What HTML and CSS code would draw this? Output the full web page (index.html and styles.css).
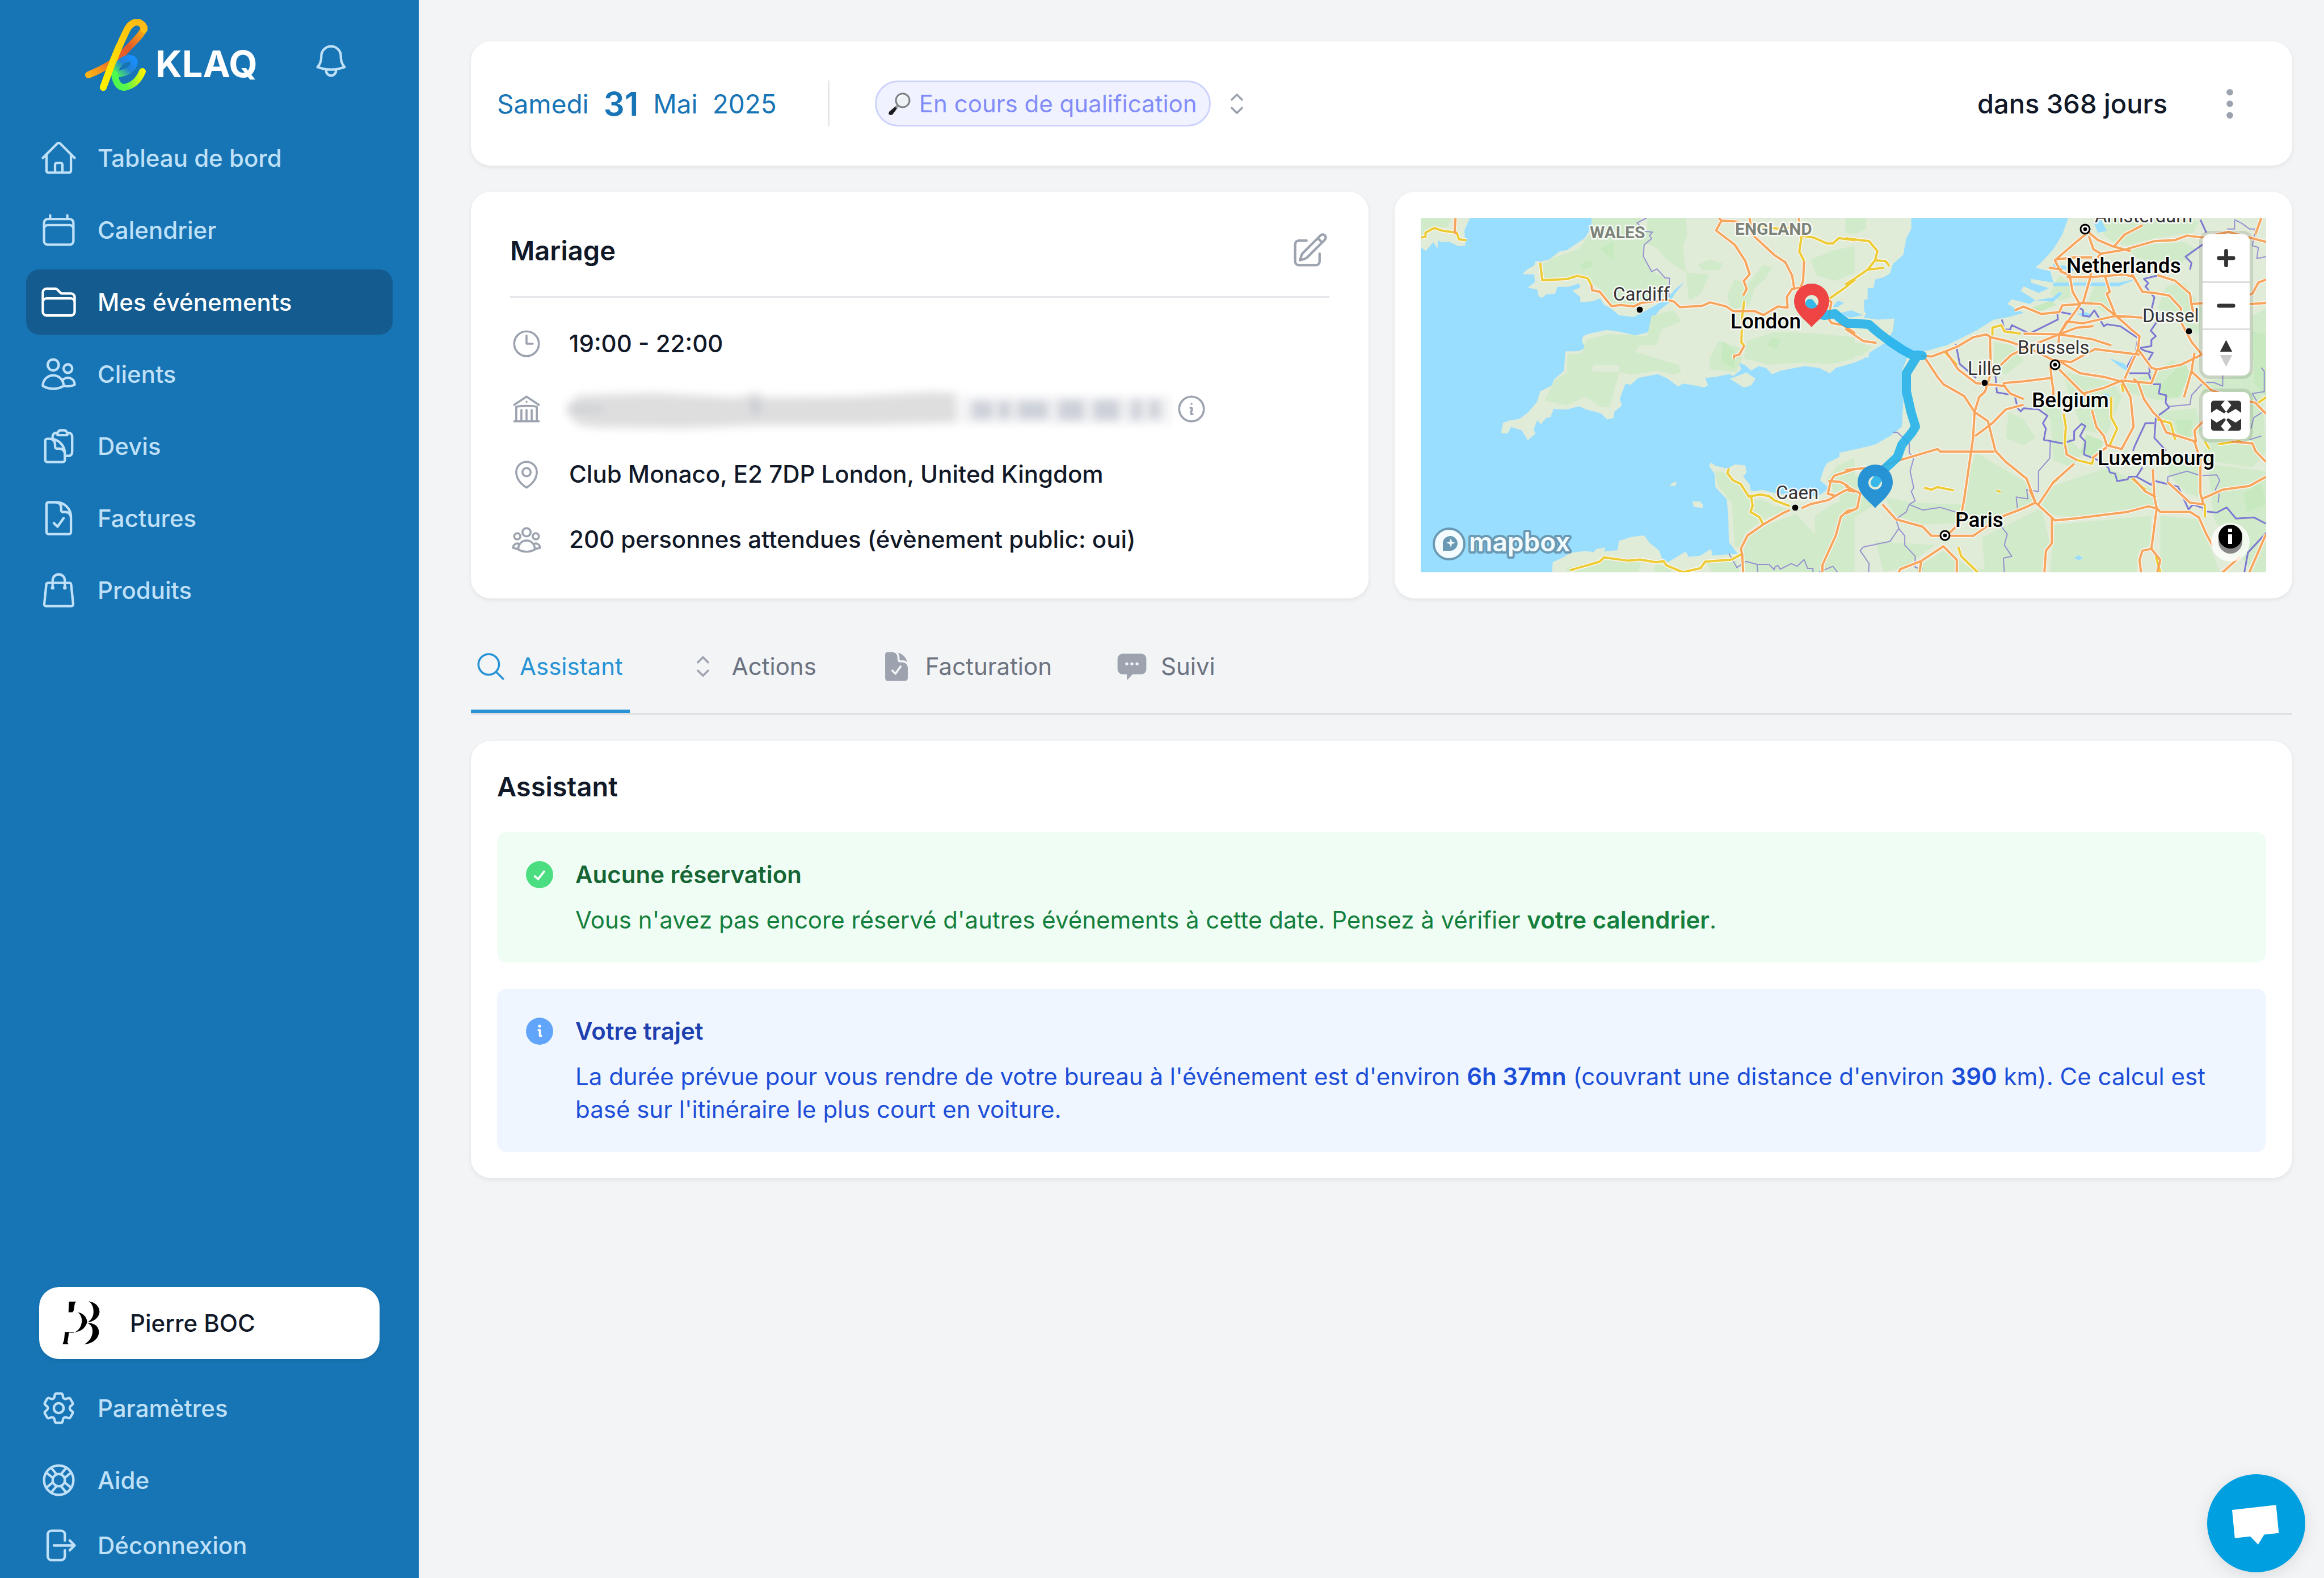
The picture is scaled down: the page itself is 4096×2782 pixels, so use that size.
FILE: index.html
```html
<!DOCTYPE html>
<html lang="fr">
<head>
<meta charset="utf-8">
<title>KLAQ - Mariage</title>
<meta name="viewport" content="width=device-width, initial-scale=1">
<link rel="stylesheet" href="styles.css">
</head>
<body>
<div class="app">
  <aside class="sidebar">
    <div class="brand">
      <svg class="brand-mark" viewBox="0 0 110 127" aria-hidden="true">
        <defs>
          <linearGradient id="orange" gradientUnits="userSpaceOnUse" x1="4" y1="98" x2="104" y2="10">
            <stop offset="0" stop-color="#fdb515"/><stop offset=".42" stop-color="#e8612a"/><stop offset=".66" stop-color="#e05a2b"/><stop offset="1" stop-color="#fdbb12"/>
          </linearGradient>
          <linearGradient id="yellow" gradientUnits="userSpaceOnUse" x1="32" y1="121" x2="96" y2="6">
            <stop offset="0" stop-color="#fff200"/><stop offset="1" stop-color="#fdbb12"/>
          </linearGradient>
          <linearGradient id="blue" gradientUnits="userSpaceOnUse" x1="84" y1="66" x2="52" y2="97">
            <stop offset="0" stop-color="#1690ff"/><stop offset=".45" stop-color="#2481d6"/><stop offset="1" stop-color="#4dfa4f"/>
          </linearGradient>
          <linearGradient id="green" gradientUnits="userSpaceOnUse" x1="52" y1="100" x2="104" y2="92">
            <stop offset="0" stop-color="#4dfa4f"/><stop offset=".35" stop-color="#5bf84a"/><stop offset="1" stop-color="#fff200"/>
          </linearGradient>
        </defs>
        <g fill="none" stroke-width="12" stroke-linecap="round" stroke-linejoin="round">
          <path stroke="url(#orange)" d="M6 98C28 89 52 77 68 59C86 39 103 25 104 14"/>
          <path stroke="url(#yellow)" d="M32 120C43 90 58 50 73 20C80 5 92 2 99 8C103 11 104 14 104 18"/>
          <path stroke="url(#blue)" d="M52 97C53 82 65 70 77 69C88 68 89 78 82 86C75 94 64 96 52 97"/>
          <path stroke="url(#green)" d="M52 97C54 112 60 121 70 120C84 117 95 107 101 92"/>
          <path stroke="url(#yellow)" d="M32 120C40 98 50 71 60 47"/>
        </g>
      </svg>
      <span class="brand-name">KLAQ</span>
      <button class="bell" type="button" aria-label="Notifications">
        <svg class="icon-lg" viewBox="0 0 24 24"><path d="M14.857 17.082a23.848 23.848 0 0 0 5.454-1.31A8.967 8.967 0 0 1 18 9.75V9A6 6 0 0 0 6 9v.75a8.967 8.967 0 0 1-2.312 6.022c1.733.64 3.56 1.085 5.455 1.31m5.714 0a24.255 24.255 0 0 1-5.714 0m5.714 0a3 3 0 1 1-5.714 0"/></svg>
      </button>
    </div>

    <nav class="menu">
      <a class="menu-item" href="#"><svg class="icon-lg" viewBox="0 0 24 24"><path d="m2.25 12 8.954-8.955c.44-.439 1.152-.439 1.591 0L21.75 12M4.5 9.75v10.125c0 .621.504 1.125 1.125 1.125H9.75v-4.875c0-.621.504-1.125 1.125-1.125h2.25c.621 0 1.125.504 1.125 1.125V21h4.125c.621 0 1.125-.504 1.125-1.125V9.75M8.25 21h8.25"/></svg>Tableau de bord</a>
      <a class="menu-item" href="#"><svg class="icon-lg" viewBox="0 0 24 24"><path d="M6.75 3v2.25M17.25 3v2.25M3 18.75V7.5a2.25 2.25 0 0 1 2.25-2.25h13.5A2.25 2.25 0 0 1 21 7.5v11.25m-18 0A2.25 2.25 0 0 0 5.25 21h13.5A2.25 2.25 0 0 0 21 18.75m-18 0v-7.5A2.25 2.25 0 0 1 5.25 9h13.5A2.25 2.25 0 0 1 21 11.25v7.5"/></svg>Calendrier</a>
      <a class="menu-item active" href="#" aria-current="page"><svg class="icon-lg" viewBox="0 0 24 24"><path d="M2.25 12.75V12A2.25 2.25 0 0 1 4.5 9.75h15A2.25 2.25 0 0 1 21.75 12v.75m-8.69-6.44-2.12-2.12a1.5 1.5 0 0 0-1.061-.44H4.5A2.25 2.25 0 0 0 2.25 6v12a2.25 2.25 0 0 0 2.25 2.25h15A2.25 2.25 0 0 0 21.75 18V9a2.25 2.25 0 0 0-2.25-2.25h-5.379a1.5 1.5 0 0 1-1.06-.44Z"/></svg>Mes événements</a>
      <a class="menu-item" href="#"><svg class="icon-lg" viewBox="0 0 24 24"><path d="M15 19.128a9.38 9.38 0 0 0 2.625.372 9.337 9.337 0 0 0 4.121-.952 4.125 4.125 0 0 0-7.533-2.493M15 19.128v-.003c0-1.113-.285-2.16-.786-3.07M15 19.128v.106A12.318 12.318 0 0 1 8.624 21c-2.331 0-4.512-.645-6.374-1.766l-.001-.109a6.375 6.375 0 0 1 11.964-3.07M12 6.375a3.375 3.375 0 1 1-6.75 0 3.375 3.375 0 0 1 6.75 0Zm8.25 2.25a2.625 2.625 0 1 1-5.25 0 2.625 2.625 0 0 1 5.25 0Z"/></svg>Clients</a>
      <a class="menu-item" href="#"><svg class="icon-lg" viewBox="0 0 24 24"><path d="M8.25 7.5V6.108c0-1.135.845-2.098 1.976-2.192.373-.03.748-.057 1.123-.08M15.75 18H18a2.25 2.25 0 0 0 2.25-2.25V6.108c0-1.135-.845-2.098-1.976-2.192a48.424 48.424 0 0 0-1.123-.08M15.75 18.75v-1.875a3.375 3.375 0 0 0-3.375-3.375h-1.5a1.125 1.125 0 0 1-1.125-1.125v-1.5A3.375 3.375 0 0 0 6.375 7.5H5.25m11.9-3.664A2.251 2.251 0 0 0 15 2.25h-1.5a2.251 2.251 0 0 0-2.15 1.586m5.8 0c.065.21.1.433.1.664v.75h-6V4.5c0-.231.035-.454.1-.664M6.75 7.5H4.875c-.621 0-1.125.504-1.125 1.125v12c0 .621.504 1.125 1.125 1.125h9.75c.621 0 1.125-.504 1.125-1.125V16.5a9 9 0 0 0-9-9Z"/></svg>Devis</a>
      <a class="menu-item" href="#"><svg class="icon-lg" viewBox="0 0 24 24"><path d="M10.125 2.25h-4.5c-.621 0-1.125.504-1.125 1.125v17.25c0 .621.504 1.125 1.125 1.125h12.75c.621 0 1.125-.504 1.125-1.125v-9M10.125 2.25h.375a9 9 0 0 1 9 9v.375M10.125 2.25A3.375 3.375 0 0 1 13.5 5.625v1.5c0 .621.504 1.125 1.125 1.125h1.5a3.375 3.375 0 0 1 3.375 3.375M9 15l2.25 2.25L15 12"/></svg>Factures</a>
      <a class="menu-item" href="#"><svg class="icon-lg" viewBox="0 0 24 24"><path d="M15.75 10.5V6a3.75 3.75 0 1 0-7.5 0v4.5m11.356-1.993 1.263 12c.07.665-.45 1.243-1.119 1.243H4.25a1.125 1.125 0 0 1-1.12-1.243l1.264-12A1.125 1.125 0 0 1 5.513 7.5h12.974c.576 0 1.059.435 1.119 1.007ZM8.625 10.5a.375.375 0 1 1-.75 0 .375.375 0 0 1 .75 0Zm7.5 0a.375.375 0 1 1-.75 0 .375.375 0 0 1 .75 0Z"/></svg>Produits</a>
    </nav>

    <div class="sidebar-foot">
      <button class="user" type="button">
        <svg class="user-logo" viewBox="45 30 255 295" aria-hidden="true"><path d="M92 36h48l-9 10-8 50-8 10H89zM222 34c40 6 71 30 72 68 0 40-40 68-80 71 26-15 42-40 40-75-1-30-10-50-32-64zM150 106c35 6 60 30 62 62-4 35-40 68-82 70 25-12 45-35 47-75 0-25-10-45-27-57zM212 177c45 0 78 20 78 60 0 45-45 78-97 82 28-18 52-40 55-85 0-30-12-47-36-57zM65 237h62v4H92l-10 65 8 12H50l10-30z"/></svg>
        Pierre BOC
      </button>
      <a class="menu-item" href="#"><svg class="icon-lg" viewBox="0 0 24 24"><path d="M9.594 3.94c.09-.542.56-.94 1.11-.94h2.593c.55 0 1.02.398 1.11.94l.213 1.281c.063.374.313.686.645.87.074.04.147.083.22.127.325.196.72.257 1.075.124l1.217-.456a1.125 1.125 0 0 1 1.37.49l1.296 2.247a1.125 1.125 0 0 1-.26 1.431l-1.003.827c-.293.241-.438.613-.43.992a7.723 7.723 0 0 1 0 .255c-.008.378.137.75.43.991l1.004.827c.424.35.534.955.26 1.43l-1.298 2.247a1.125 1.125 0 0 1-1.369.491l-1.217-.456c-.355-.133-.75-.072-1.076.124a6.47 6.47 0 0 1-.22.128c-.331.183-.581.495-.644.869l-.213 1.281c-.09.543-.56.94-1.11.94h-2.594c-.55 0-1.019-.398-1.11-.94l-.213-1.281c-.062-.374-.312-.686-.644-.87a6.52 6.52 0 0 1-.22-.127c-.325-.196-.72-.257-1.076-.124l-1.217.456a1.125 1.125 0 0 1-1.369-.49l-1.297-2.247a1.125 1.125 0 0 1 .26-1.431l1.004-.827c.292-.24.437-.613.43-.991a6.932 6.932 0 0 1 0-.255c.007-.38-.138-.751-.43-.992l-1.004-.827a1.125 1.125 0 0 1-.26-1.43l1.297-2.247a1.125 1.125 0 0 1 1.37-.491l1.216.456c.356.133.751.072 1.076-.124.072-.044.146-.086.22-.128.332-.183.582-.495.644-.869l.214-1.28ZM15 12a3 3 0 1 1-6 0 3 3 0 0 1 6 0Z"/></svg>Paramètres</a>
      <div class="menu-pair">
        <a class="menu-item" href="#"><svg class="icon-lg" viewBox="0 0 24 24"><path d="M16.712 4.33a9.027 9.027 0 0 1 1.652 1.306c.51.51.944 1.064 1.306 1.652M16.712 4.33l-3.448 4.138m3.448-4.138a9.014 9.014 0 0 0-9.424 0M19.67 7.288l-4.138 3.448m4.138-3.448a9.014 9.014 0 0 1 0 9.424m-4.138-5.976a3.736 3.736 0 0 0-.88-1.388 3.737 3.737 0 0 0-1.388-.88m2.268 2.268a3.765 3.765 0 0 1 0 2.528m-2.268-4.796a3.765 3.765 0 0 0-2.528 0m4.796 4.796c-.181.506-.475.982-.88 1.388a3.736 3.736 0 0 1-1.388.88m2.268-2.268 4.138 3.448m0 0a9.027 9.027 0 0 1-1.306 1.652c-.51.51-1.064.944-1.652 1.306m0 0-3.448-4.138m3.448 4.138a9.014 9.014 0 0 1-9.424 0m5.976-4.138a3.765 3.765 0 0 1-2.528 0m0 0a3.736 3.736 0 0 1-1.388-.88 3.737 3.737 0 0 1-.88-1.388m2.268 2.268L7.288 19.67m0 0a9.024 9.024 0 0 1-1.652-1.306 9.027 9.027 0 0 1-1.306-1.652m0 0 4.138-3.448M4.33 16.712a9.014 9.014 0 0 1 0-9.424m4.138 5.976a3.765 3.765 0 0 1 0-2.528m0 0c.181-.506.475-.982.88-1.388a3.736 3.736 0 0 1 1.388-.88m-2.268 2.268L4.33 7.288m6.406 1.18L7.288 4.33m0 0a9.024 9.024 0 0 0-1.652 1.306A9.025 9.025 0 0 0 4.33 7.288"/></svg>Aide</a>
        <a class="menu-item" href="#"><svg class="icon-lg" viewBox="0 0 24 24"><path d="M15.75 9V5.25A2.25 2.25 0 0 0 13.5 3h-6a2.25 2.25 0 0 0-2.25 2.25v13.5A2.25 2.25 0 0 0 7.5 21h6a2.25 2.25 0 0 0 2.25-2.25V15m3 0 3-3m0 0-3-3m3 3H9"/></svg>Déconnexion</a>
      </div>
    </div>
  </aside>

  <main class="main">
    <header class="card topbar">
      <div class="date"><span>Samedi</span><strong>31</strong><span>Mai</span><span>2025</span></div>
      <button class="status" type="button">
        <span class="pill">
          <svg class="lens" viewBox="0 0 40 40" aria-hidden="true">
            <path d="M13 24l3 3-9 12-4 1-3-2 1-4z" fill="#1c1c1e"/><path d="M14 22l4 3-3 4-3-3z" fill="#9a9ca3"/>
            <circle cx="25" cy="14" r="12" fill="#eef1f3" stroke="#7d8085" stroke-width="3"/><path d="M18 10a9 9 0 0 1 7-5" fill="none" stroke="#fff" stroke-width="3" stroke-linecap="round"/>
          </svg>
          En cours de qualification
        </span>
        <svg class="icon-md" viewBox="0 0 24 24"><path d="M8.25 15 12 18.75 15.75 15m-7.5-6L12 5.25 15.75 9"/></svg>
      </button>
      <p class="countdown">dans 368 jours</p>
      <button class="more" type="button" aria-label="Plus d'options">
        <svg class="icon-md solid" viewBox="0 0 24 24"><circle cx="12" cy="3.6" r="2.4"/><circle cx="12" cy="12" r="2.4"/><circle cx="12" cy="20.4" r="2.4"/></svg>
      </button>
    </header>

    <div class="overview">
      <section class="card event">
        <div class="event-head">
          <h2>Mariage</h2>
          <button type="button" aria-label="Modifier"><svg class="icon-lg" viewBox="0 0 24 24"><path d="m16.862 4.487 1.687-1.688a1.875 1.875 0 1 1 2.652 2.652L10.582 16.07a4.5 4.5 0 0 1-1.897 1.13L6 18l.8-2.685a4.5 4.5 0 0 1 1.13-1.897l8.932-8.931Zm0 0L19.5 7.125M18 14v4.75A2.25 2.25 0 0 1 15.75 21H5.25A2.25 2.25 0 0 1 3 18.75V8.25A2.25 2.25 0 0 1 5.25 6H10"/></svg></button>
        </div>
        <ul class="facts">
          <li><svg class="icon-md" viewBox="0 0 24 24"><path d="M12 6v6h4.5m4.5 0a9 9 0 1 1-18 0 9 9 0 0 1 18 0Z"/></svg>19:00 - 22:00</li>
          <li><svg class="icon-md" viewBox="0 0 24 24"><path d="M12 21v-8.25M15.75 21v-8.25M8.25 21v-8.25M3 9l9-6 9 6m-1.5 12V10.332A48.36 48.36 0 0 0 12 9.75c-2.551 0-5.056.2-7.5.582V21M3 21h18M12 6.75h.008v.008H12V6.75Z"/></svg>
            <svg class="hidden-contact" viewBox="0 0 1068 80" aria-label="Coordonnées masquées">
              <defs><filter id="soft" x="-5%" y="-40%" width="110%" height="180%"><feGaussianBlur stdDeviation="8"/></filter></defs>
              <g filter="url(#soft)">
                <path fill="#dededf" d="M-4 34L16 16 150 12 300 20 330 10 345 20 500 18 640 10 682 12 684 64 540 68 350 68 200 74 50 72 16 68 -4 48z"/>
                <path fill="#c6c9d0" d="M322 22h14v28h-14zM0 36h60v8H0z"/>
                <path fill="#ececef" d="M690 18h370v48H690z" opacity=".7"/>
                <path fill="#ccd0d8" d="M710 26h36v32h-36zM756 26h22v32h-22zM790 26h54v32h-54zM862 24h46v36h-46zM924 24h46v36h-46zM990 24h20v36h-20zM1022 24h20v34h-20z"/>
              </g>
            </svg>
            <svg class="icon-md" viewBox="0 0 24 24"><path d="m11.25 11.25.041-.02a.75.75 0 0 1 1.063.852l-.708 2.836a.75.75 0 0 0 1.063.853l.041-.021M21 12a9 9 0 1 1-18 0 9 9 0 0 1 18 0Zm-9-3.75h.008v.008H12V8.25Z"/></svg></li>
          <li><svg class="icon-md" viewBox="0 0 24 24"><path d="M15 10.5a3 3 0 1 1-6 0 3 3 0 0 1 6 0ZM19.5 10.5c0 7.142-7.5 11.25-7.5 11.25S4.5 17.642 4.5 10.5a7.5 7.5 0 1 1 15 0Z"/></svg>Club Monaco, E2 7DP London, United Kingdom</li>
          <li><svg class="icon-md" viewBox="0 0 24 24"><path d="M18 18.72a9.094 9.094 0 0 0 3.741-.479 3 3 0 0 0-4.682-2.72m.94 3.198.001.031c0 .225-.012.447-.037.666A11.944 11.944 0 0 1 12 21c-2.17 0-4.207-.576-5.963-1.584A6.062 6.062 0 0 1 6 18.719m12 0a5.971 5.971 0 0 0-.941-3.197m0 0A5.995 5.995 0 0 0 12 12.75a5.995 5.995 0 0 0-5.058 2.772m0 0a3 3 0 0 0-4.681 2.72 8.986 8.986 0 0 0 3.74.477m.94-3.197a5.971 5.971 0 0 0-.94 3.197M15 6.75a3 3 0 1 1-6 0 3 3 0 0 1 6 0Zm6 3a2.25 2.25 0 1 1-4.5 0 2.25 2.25 0 0 1 4.5 0Zm-13.5 0a2.25 2.25 0 1 1-4.5 0 2.25 2.25 0 0 1 4.5 0Z"/></svg>200 personnes attendues (évènement public: oui)</li>
        </ul>
      </section>

      <section class="card map-card">
        <div class="map">
          <svg class="map-canvas" viewBox="0 0 1490 625" preserveAspectRatio="xMidYMid slice" role="img" aria-label="Itinéraire vers Londres">
            <defs>
              <g id="roads-west" transform="matrix(.52365 0 0 .4723 -56.5 -54)">
                <path class="line" d="M225 115l-3 50 6 10M682 365L685 385 710 390 750 444 780 440 825 445 850 432 935 420 960 427 980 448 1055 443 1082 430 1135 445 1160 463 1230 462 1262 477 1310 445 1343 450 1340 410 1358 380 1385 375M1112 115L1120 125 1102 162 1165 215 1200 275 1215 325 1195 350 1205 380 1193 405M1120 125L1170 128 1215 145M1215 115L1222 175 1300 255 1335 280 1358 330 1365 378M1380 115L1390 182M1398 275L1395 350 1385 380M1480 420L1490 430 1480 490 1490 507 1530 515 1570 545M1197 592L1180 625 1162 630 1162 640M1193 1437L1190 1370 1185 1350 1208 1300 1262 1258 1330 1215 1350 1205M1390 1198L1420 1183 1480 1168 1510 1148 1540 1130 1570 1137M1480 1097L1520 1100 1545 1115 1550 1130M1500 1150L1478 1145 1488 1097 1500 1077 1570 1052M1460 1437L1460 1410 1505 1300 1522 1230 1545 1208 1570 1203"/>
              </g>
              <g id="minor-west" transform="matrix(.52365 0 0 .4723 -56.5 -54)">
                <path class="line" d="M109 188l15-3 0-15 30-18 25 10 50 8 8 25 25 3M510 282L517 347 600 343 635 331 670 340 682 365M1197 425L1190 480 1187 580 1197 592M1215 145L1270 148 1310 155 1360 150 1395 182 1430 188 1475 210 1495 210 1515 190 1570 198M1390 182L1382 240 1398 275M1570 345L1530 380 1485 415M1145 1050L1140 1068 1160 1095 1185 1108 1212 1155 1250 1147 1280 1153 1300 1170 1350 1190M1220 1155L1225 1190 1218 1212 1248 1232 1260 1258M610 1430L710 1398 725 1382 805 1394 845 1390 900 1400 925 1396 935 1412 990 1437 1050 1422 1065 1398 1155 1390 1187 1370"/>
              </g>
              <g id="roads-east" transform="matrix(.52365 0 0 .652 748.4 -335.7)">
                <path class="line" d="M0 815L60 848 105 853M0 1197L120 1187 185 1170 310 1140 320 1147 420 1147 500 1147M255 888L290 890 340 875 380 862 430 838 475 830 490 838 545 848 625 870 700 900M265 890L310 945 330 965 400 997 435 1040 480 1065 505 1145 540 1175 610 1220 640 1285 695 1325 705 1333 770 1328 950 1310 1020 1295 1045 1300M600 828L720 830 780 812 835 808M490 838L487 840 490 935 470 985 450 1000 435 1040 430 1110 400 1275 385 1340 360 1360 335 1378M340 878L380 925 440 962 540 970M437 1105L495 1070 540 1033 600 1020M530 962L600 957 690 948M530 965L555 990 600 1005M520 915L560 885 620 862 720 830 830 843 895 860M700 900L760 905 840 870 990 885M725 905L790 935 870 945 930 958M690 918L695 955 700 980 700 1010M720 925L800 990 830 1010M830 1035L845 1080 870 1105 880 1130 930 1140 970 1080 960 1000 930 955M800 990L870 975 930 955 1030 962 1048 925 1130 912 1200 885M808 560L770 585 705 630 725 660 755 670 765 715 790 750 745 800 720 830 715 880M685 650L730 655M705 628L770 622 830 622M825 675L800 745M790 745L860 748 910 780 940 800 960 815 990 835 985 870 940 950M745 675L830 675 940 668 970 675 1000 715 1040 718 1090 725 1130 760 1125 790 1165 850 1200 885M720 830L745 795 800 800 910 780 1000 785M820 565L835 600 860 612 830 640 825 675M820 555L850 575 900 592 960 605M860 612L935 602 1040 578 1110 575 1150 563 1200 568 1290 553 1416 580M1380 560L1400 515M905 592L940 560 1000 535M875 675L890 715 880 720 910 780M960 660L1000 715M1050 670L1110 685 1160 720 1165 750 1180 800M1416 682L1390 690 1370 720 1300 740 1165 748M1416 745L1300 752M570 765L600 755 660 775 720 770 730 752 790 748M985 870L1030 920 1048 925M985 960L1005 1005 1035 1040 1060 1060 1080 1095 1180 1120 1175 1090 1210 1060M985 960L970 950M1140 1000L1165 930 1175 880M1165 930L1230 980 1300 1000 1380 1015 1416 1045M1300 1120L1370 1125 1380 1145 1416 1175M1175 1120L1195 1170 1195 1260 1205 1290M1416 1215L1360 1240 1270 1250 1200 1275M1085 1230L1160 1285 1210 1290M1035 1195L1040 1270 1048 1300 1035 1380 1030 1410 1000 1415 990 1440 995 1473M970 1220L1010 1255 1045 1270M1048 1300L1060 1310 1160 1310 1190 1325 1215 1370 1235 1400M695 1325L695 1395 675 1415 670 1473M1030 1410L1060 1440 1050 1473M180 1473L185 1465 255 1443 330 1403 375 1440 375 1473M255 1443L250 1473M125 1290L170 1330 260 1350 290 1375 320 1375M350 1375L430 1375 520 1325 600 1300 640 1285M0 1315L40 1300 50 1260 0 1240M740 1130L745 1155 780 1170M770 1180L700 1230 650 1290M830 1165L880 1135M1270 1473L1330 1430M1416 1370L1360 1473M640 1285L620 1250"/>
              </g>
              <g id="minor-east" transform="matrix(.52365 0 0 .652 748.4 -335.7)">
                <path class="line" d="M0 570L80 578 108 605 100 630 75 655 30 680 0 695M100 630L135 632 148 645M75 655L130 650M895 1000L895 1055 915 1085 890 1130M735 1045L742 1080 738 1130M265 1245L290 1250 310 1243 365 1252M495 833L495 812 525 805 535 822 590 828M715 1220L695 1235M780 1170L830 1180 835 1165M1050 1060L1095 1070 1110 1115M1210 1120L1225 1140M1255 1127L1330 1118M965 1220L1010 1250M335 878L375 912M380 1405L390 1430 445 1473M1045 1430L1060 1473M1416 1000L1390 1015M1210 1290L1210 1325M930 965L935 985M510 1253l12 3"/>
              </g>
              <path id="pin" fill-rule="evenodd" d="M0 0C-6-9-31-24-31-46A31 31 0 1 1 31-46C31-24 6-9 0 0ZM0-57A12 12 0 1 0 0-33A12 12 0 1 0 0-57Z"/>
            </defs>
            <rect width="1490" height="625" fill="#99ddff"/>
            <g fill="#e0ebd8" transform="matrix(.52365 0 0 .4723 -56.5 -54)">
              <path d="M109 115H274L255 160 258 218 235 220 205 205 180 205 165 200 165 228 150 205 125 238 109 225Z"/>
              <path d="M683 115V150L660 190 630 212 600 235 575 240 540 270 510 278 495 275 490 292 465 308 450 325 490 325 492 355 468 375 500 382 505 408 518 413 530 400 560 398 568 372 605 372 640 360 645 375 618 386 645 410 645 430 690 425 712 415 725 440 745 450 775 478 825 485 860 465 900 440 940 412 965 380 995 355 965 395 945 430 910 460 885 500 878 540 830 553 780 540 735 533 680 545 655 555 650 575 662 600 640 612 595 613 590 685 555 720 550 740 510 762 500 800 470 840 440 865 408 870 385 880 378 918 400 920 412 895 448 908 468 945 495 920 488 905 500 870 512 885 530 862 545 858 555 828 600 830 640 818 665 830 700 840 715 845 735 867 757 862 760 838 785 815 778 790 797 733 815 738 840 712 905 698 935 712 975 745 990 733 1040 742 1060 748 1075 740 1065 712 1100 708 1145 698 1160 705 1187 680 1178 655 1200 665 1220 685 1245 668 1270 675 1290 698 1320 685 1400 668 1450 675 1485 695 1505 675 1568 655 1600 640V115Z"/>
              <path d="M1148 715L1205 692 1235 715 1220 740 1195 748ZM945 1115l10-12 15-3-5 15zM1022 1173h25l10 10v15l-30-5z"/>
              <path d="M1078 1040L1085 1027 1100 1040 1140 1050 1165 1035 1200 1038 1205 1065 1193 1080 1215 1110 1220 1135 1260 1130 1310 1145 1400 1150 1440 1155 1470 1135 1480 1120 1452 1095 1465 1050 1475 1030 1520 1005 1545 987 1568 980 1600 975V1437H550L552 1400 590 1380 610 1365 660 1358 690 1362 700 1350 730 1345 725 1360 770 1355 775 1320 820 1305 860 1300 880 1330 910 1355 920 1385 940 1400 1000 1360 1010 1380 1050 1375 1085 1350 1090 1375 1150 1370 1175 1370 1165 1355 1145 1325 1143 1230 1138 1165 1100 1120 1097 1070Z"/>
            </g>
            <g fill="#e0ebd8" transform="matrix(.52365 0 0 .652 748.4 -335.7)">
              <path d="M-20 505H222V545L205 570 195 615 160 640 150 665 130 675 100 682 95 705 75 705 75 735 40 742 60 762 70 775 60 785 110 790 165 787 160 820 140 850 110 865 80 880 78 893 50 893 0 910-20 915Z"/>
              <path d="M-20 1150L40 1140 100 1128 150 1105 190 1080 195 1010 190 930 215 878 270 875 340 860 440 820 500 790 555 782 600 772 545 748 560 735 620 748 640 738 590 712 600 700 650 718 685 705 625 690 625 680 700 690 690 660 640 650 660 635 700 600 730 560 755 505H1416V1480H-20Z"/>
            </g>
            <g fill="#d1ebca" transform="matrix(.52365 0 0 .4723 -56.5 -54)">
              <path d="M109 115H210L200 150 150 150 109 190ZM683 115H850L838 140 885 180 858 220 857 258 885 315 935 340 940 395 870 425 820 440 745 435 715 385 660 335 600 340 520 345 512 290 560 262 640 230 690 160ZM870 115H1000L1005 180 990 220 1000 318 975 300 940 275 905 230 870 210ZM1040 290L1080 270 1125 285 1110 310 1060 310ZM1140 400L1165 345 1210 360 1260 290 1290 300 1270 340 1230 380 1215 440 1150 460ZM1000 320L1080 325 1050 400 1010 420ZM665 570L740 548 870 556 885 480 960 460 985 500 920 530 900 590 845 590 830 615 905 640 975 665 985 690 960 700 905 685 820 700 775 690 775 665 690 662 680 688 775 690 745 822 715 820 662 782 600 815 525 796 560 720 600 690 602 625 650 620ZM1080 640L1110 575 1185 600 1190 640 1170 690 1080 680ZM1205 575L1300 540 1430 545 1568 560V640L1490 660 1400 655 1280 662 1195 640ZM1420 270L1500 235 1568 220V320L1500 350 1440 330ZM1100 1060L1140 1065 1165 1100 1200 1120 1220 1170 1260 1165 1300 1190 1345 1200 1262 1240 1200 1290 1180 1350 1165 1340 1155 1180 1105 1110ZM1275 1260L1370 1220 1435 1295 1435 1225 1500 1180 1568 1160V1437H1195L1195 1350 1215 1300ZM600 1420L720 1390 850 1400 840 1437H600ZM900 1405l60 20-10 12h-60zM1070 1405l100-10 10 42h-90zM1475 1090L1510 1040 1568 1010V1120L1500 1140Z"/>
              <path fill="#c7e9c0" d="M712 230L757 200V275ZM645 290l20-18 20 5-5 22-25 8zM1275 590l15-30 30 10-15 35zM1120 650l5-75 40 35v70z"/>
            </g>
            <g fill="#d1ebca" transform="matrix(.52365 0 0 .652 748.4 -335.7)">
              <path d="M0 515H70V545L30 560 0 555ZM-10 850L60 855 90 865 60 885-10 895ZM850 520L930 515 1000 530 1100 515 1190 525 1170 555 1040 570 950 590 900 580 870 560ZM960 590L1140 580 1180 600 1150 630 1050 660 1000 625 970 620ZM720 670L755 690 760 730 720 740 690 720ZM840 690L880 700 900 760 870 770 820 740ZM1080 700L1140 690 1200 760 1190 830 1120 790 1050 760ZM1370 780L1416 760V960L1370 900ZM500 850L560 860 600 900 540 940 500 920ZM730 930L900 960 930 1000 880 1100 800 1090 760 1010ZM640 1000L720 1020 740 1100 800 1150 760 1190 700 1170 690 1060ZM940 960L1050 930 1100 900 1160 930 1130 1000 1060 1010 960 990ZM1050 1040L1180 1030 1200 1090 1160 1110 1090 1100ZM1200 960L1400 930 1416 1150 1370 1190 1210 1170ZM550 1040L600 1060 640 1110 600 1130 540 1110ZM-20 1205L40 1210 100 1290 40 1320-20 1330ZM130 1270L220 1285 400 1290 380 1340 260 1345 170 1320ZM440 1150L610 1230 640 1280 560 1310 440 1360 400 1330 410 1220ZM700 1240L880 1190 1040 1250 1040 1290 800 1325 700 1320 660 1290ZM100 1390L300 1400 200 1460 130 1473ZM240 1460L330 1415 420 1460 520 1473H240ZM700 1345L1030 1320 1025 1400 985 1420 980 1473H690ZM460 1380L660 1300 690 1400 660 1473H470ZM1060 1320L1190 1330 1260 1473H1060ZM1090 1150L1190 1180 1190 1270 1150 1260 1090 1210ZM1220 1180L1416 1200V1473H1370L1240 1330Z"/>
              <path fill="#c7e9c0" d="M1060 970L1140 900 1160 940 1120 1000 1070 1000ZM1370 820L1416 830V1000L1375 960ZM1340 1260L1400 1230 1416 1290 1350 1310ZM1110 1060L1170 1060 1160 1110 1120 1100ZM620 760l70-20 20 10-60 20zM810 1100l60 20-30 50-50-20zM1250 1380l60-40 60 60-50 40z"/>
            </g>
            <g fill="#99ddff" transform="matrix(.52365 0 0 .652 748.4 -335.7)">
              <path d="M835 525L860 520 880 550 850 555ZM700 640L780 650 850 630 860 635 780 660 700 650ZM700 690L780 690 920 690 980 680 920 700 780 698 700 700ZM640 738L700 730 720 715 730 720 700 742ZM770 1435l15-8 15 8-15 6zM780 775l30-5 20 8-30 4zM890 895l50 15 20 25-40-20zM840 1000l40-10 10 8-40 8zM-30 775L20 765 60 778 20 785ZM-45 757l20-18 20 5-20 12z"/>
            </g>
            <g class="border thin" transform="matrix(.52365 0 0 .4723 -56.5 -54)">
              <path class="line" d="M868 115L836 133 865 165 888 168 878 180 885 192 860 215 857 258 885 315 903 305 930 338 945 340 943 410M1145 1367L1172 1420 1202 1397 1240 1408 1242 1437M1240 1408L1280 1408 1298 1428 1300 1418 1310 1412 1318 1426 1355 1405 1375 1415 1398 1390 1410 1423 1428 1423 1428 1437M1448 1437L1495 1415 1510 1437"/>
            </g>
            <g class="border thin" transform="matrix(.52365 0 0 .652 748.4 -335.7)">
              <path class="line" d="M160 1095L175 1095 215 1125 215 1150 230 1165 218 1200 230 1245 222 1255 235 1280 215 1290 205 1310 170 1330 180 1355 150 1390 60 1405 50 1415 80 1450 78 1473M215 1290L260 1305 320 1298 390 1315M180 1355L200 1375 200 1400 235 1430 235 1460 260 1465M690 1120L688 1165 650 1200 650 1255 610 1250 615 1275 575 1270 580 1305 510 1335 545 1370 535 1400 560 1430 532 1435 535 1473M1090 1025L1160 1020 1165 995 1205 960 1240 960 1270 970 1270 940M1400 920L1410 930V985L1370 990 1405 1040 1375 1055 1365 1085M1085 1215L1150 1200 1195 1212 1250 1210 1260 1225 1245 1250 1258 1260 1255 1285M1310 520L1335 530 1360 545 1380 545 1375 570 1370 590 1390 595 1385 625 1416 620M1310 520L1310 545 1285 545M1360 1115L1400 1105M1085 1215V1230"/>
            </g>
            <g class="border" transform="matrix(.52365 0 0 .652 748.4 -335.7)">
              <path class="line" d="M527 790L535 817 555 817 560 805 620 828 715 790 713 768 770 777 788 758 800 765 800 780 822 782 838 765 870 808 880 803 925 808 985 840 978 875 950 915 955 935 1020 935 1035 965 1060 965 1055 990 1080 995 1078 1015 1090 1028 1045 1055 1040 1110 1080 1145M372 857L385 910 440 948M505 940L510 987 570 995 580 1030 590 1038 600 1030 650 1033 680 1050 665 1070 675 1085 668 1115 730 1125 770 1115 770 1092 795 1072 808 1078 790 1105 808 1120 803 1155 850 1170 885 1190 890 1203 908 1207 915 1227 950 1222 955 1215 980 1215M980 1215L1030 1237 1035 1225 1120 1242 1155 1303 1170 1290 1205 1300 1205 1308 1250 1312 1283 1298 1315 1328 1375 1325 1416 1342M980 1215L1000 1190M968 1145L975 1130 1010 1070 1040 1070M1195 520L1215 555M1215 580L1145 620 1165 637 1160 655M1050 672L1075 675 1045 672 1005 680 1020 692 1010 700 1040 730 1030 765 1055 788 1028 820 1045 835 1030 845 1030 862 990 867 1010 875 1035 880 1020 900 1025 935M1343 1473L1355 1420 1416 1367"/>
            </g>
            <g class="casing"><use href="#roads-west"/><use href="#minor-west"/><use href="#roads-east"/><use href="#minor-east"/></g>
            <g class="minor"><use href="#minor-west"/><use href="#minor-east"/></g>
            <g class="road"><use href="#roads-west"/><use href="#roads-east"/></g>

            <path class="route" d="M686 151L700 170 712 172 730 169 740 178 752 186 764 186 790 188 806 202 827 218 848 232 866 242 884 243 876 242 856 274 856 306 864 342 872 368 866 378 848 400 840 422 816 444 801 467"/>

            <g class="place">
              <circle cx="386" cy="162" r="6"/><circle cx="660" cy="511" r="6"/><circle cx="1354" cy="200" r="6"/><circle cx="994" cy="291" r="6"/>
              <g class="capital"><circle cx="1171" cy="20" r="8"/><circle cx="1118" cy="259" r="8"/><circle cx="924" cy="560" r="8"/></g>
              <circle cx="1171" cy="20" r="4"/><circle cx="1118" cy="259" r="4"/><circle cx="924" cy="560" r="4"/>
            </g>
            <g class="region"><text x="298" y="36">WALES</text><text x="554" y="30">ENGLAND</text></g>
            <g class="city">
              <text x="339" y="146">Cardiff</text><text x="626" y="496">Caen</text><text x="1188" y="8">Amsterdam</text><text x="1272" y="184">Dussel</text><text x="1052" y="240">Brussels</text><text x="964" y="277">Lille</text>
            </g>
            <g class="country">
              <text x="546" y="195">London</text><text x="1138" y="97">Netherlands</text><text x="1077" y="334">Belgium</text><text x="1193" y="436">Luxembourg</text><text x="942" y="545">Paris</text>
            </g>
            <use href="#pin" fill="#ef4444" transform="translate(689 193)"/>
            <use href="#pin" fill="#2793d5" transform="translate(801 512)"/>
            <g class="mapbox">
              <circle cx="50" cy="575" r="27"/>
              <path d="M39 587V572a13 13 0 1 1 13 15Z" fill="#6a9ab3" stroke="none"/>
              <path d="M53 565l2 6 6 2-6 2-2 6-2-6-6-2 6-2z" stroke="none"/>
              <text x="85" y="588">mapbox</text>
            </g>
          </svg>
          <div class="map-tools">
            <div class="tool-group">
              <button type="button" aria-label="Zoomer"><svg viewBox="0 0 82 82"><path d="M28 41h26M41 28v26" stroke="#333" stroke-width="7" stroke-linecap="round"/></svg></button>
              <button type="button" aria-label="Dézoomer"><svg viewBox="0 0 82 82"><path d="M28 41h26" stroke="#333" stroke-width="7" stroke-linecap="round"/></svg></button>
              <button type="button" aria-label="Orientation"><svg viewBox="0 0 82 82"><path d="M41 18l11 21H30z" fill="#333"/><path d="M41 66l11-21H30z" fill="#ccc"/></svg></button>
            </div>
            <div class="tool-group">
              <button type="button" aria-label="Plein écran"><svg viewBox="0 0 83 83" fill="#333"><path d="M14 19a5 5 0 0 1 5-5h20l-7 8 9 12-3 3-14-8-10 7z"/><path d="M69 19a5 5 0 0 0-5-5H44l7 8-9 12 3 3 14-8 10 7z"/><path d="M14 64a5 5 0 0 0 5 5h20l-7-8 9-12-3-3-14 8-10-7z"/><path d="M69 64a5 5 0 0 1-5 5H44l7-8-9-12 3-3 14 8 10-7z"/></svg></button>
            </div>
          </div>
          <button class="map-info" type="button" aria-label="Attribution"><svg viewBox="0 0 68 68"><circle cx="34" cy="34" r="34" fill="#fff" opacity=".75"/><circle cx="34" cy="33" r="21" fill="#888"/><circle cx="34" cy="24" r="21"/><path d="M30 20h7v17h-7zM30 10h7v6h-7z" fill="#fff"/></svg></button>
        </div>
      </section>
    </div>

    <nav class="tabs">
      <a class="tab active" href="#" aria-current="page"><svg class="icon-md" viewBox="0 0 24 24"><path d="m21 21-5.197-5.197m0 0A7.5 7.5 0 1 0 5.196 5.196a7.5 7.5 0 0 0 10.607 10.607Z"/></svg>Assistant</a>
      <a class="tab" href="#"><svg class="icon-md" viewBox="0 0 24 24"><path d="M8.25 15 12 18.75 15.75 15m-7.5-6L12 5.25 15.75 9"/></svg>Actions</a>
      <a class="tab" href="#"><svg class="icon-md solid" viewBox="0 0 24 24"><path d="M9 1.5H5.625c-1.036 0-1.875.84-1.875 1.875v17.25c0 1.035.84 1.875 1.875 1.875h12.75c1.035 0 1.875-.84 1.875-1.875V12.75A3.75 3.75 0 0 0 16.5 9h-1.875a1.875 1.875 0 0 1-1.875-1.875V5.25A3.75 3.75 0 0 0 9 1.5Z"/><path d="M12.971 1.816A5.23 5.23 0 0 1 14.25 5.25v1.875c0 .207.168.375.375.375H16.5a5.23 5.23 0 0 1 3.434 1.279 9.768 9.768 0 0 0-6.963-6.963Z"/><path d="M9 15l2.25 2.25L15 12" fill="none" stroke="#f3f4f6" stroke-width="1.5" stroke-linecap="round" stroke-linejoin="round"/></svg>Facturation</a>
      <a class="tab" href="#"><svg class="icon-md solid" viewBox="0 0 24 24"><path fill-rule="evenodd" d="M5 2.7h14a3.6 3.6 0 0 1 3.5 3.6v7.9a3.6 3.6 0 0 1-3.5 3.5h-6.500L8.3 22v-4.300H5a3.600 3.600 0 0 1-3.500-3.500V6.300A3.600 3.600 0 0 1 5 2.700ZM8.250 9a1.100 1.100 0 1 0 0 2.200 1.100 1.100 0 0 0 0-2.200ZM12 9a1.100 1.100 0 1 0 0 2.200A1.100 1.100 0 0 0 12 9Zm3.750 0a1.100 1.100 0 1 0 0 2.200 1.100 1.100 0 0 0 0-2.200Z"/></svg>Suivi</a>
    </nav>

    <section class="card assistant">
      <h2>Assistant</h2>
      <article class="alert success">
        <svg class="icon-md solid" viewBox="0 0 24 24"><circle cx="12" cy="12" r="9.900"/><path d="M8.500 13.200l2.500 2.100 4.300-5.600" fill="none" stroke="#fff" stroke-width="1.500" stroke-linecap="round" stroke-linejoin="round"/></svg>
        <div>
          <h3>Aucune réservation</h3>
          <p>Vous n'avez pas encore réservé d'autres événements à cette date. Pensez à vérifier <a href="#">votre calendrier</a>.</p>
        </div>
      </article>
      <article class="alert info">
        <svg class="icon-md solid" viewBox="0 0 24 24"><circle cx="12" cy="12" r="9.900"/><circle cx="12" cy="8.300" r="1.100" fill="#fff"/><path d="M11.200 11.200h1v4.200h1" fill="none" stroke="#fff" stroke-width="1.500" stroke-linecap="round" stroke-linejoin="round"/></svg>
        <div>
          <h3>Votre trajet</h3>
          <p>La durée prévue pour vous rendre de votre bureau à l'événement est d'environ <b>6h 37mn</b> (couvrant une distance d'environ <b>390</b> km). Ce calcul est basé sur l'itinéraire le plus court en voiture.</p>
        </div>
      </article>
    </section>
  </main>
</div>

<button class="chat" type="button" aria-label="Ouvrir le chat">
  <svg viewBox="398 235 645 645"><path fill="#fff" d="M562 470L851 437 869 622 773 632 733 697 682 644 580 655Z"/></svg>
</button>
</body>
</html>
```
FILE: styles.css
```css
* {
  box-sizing: border-box;
}

body {
  margin: 0;
  background: #f3f4f6;
  color: #111827;
  font-family: Inter, "Liberation Sans", sans-serif;
  font-size: 42px;
  line-height: 58px;
}

h2,
h3,
p,
ul {
  margin: 0;
  padding: 0;
}

h2 {
  font-size: 47px;
  font-weight: 600;
  line-height: 69px;
}

h3 {
  font-size: 42px;
  font-weight: 600;
}

a {
  color: inherit;
  text-decoration: none;
}

button {
  margin: 0;
  padding: 0;
  border: 0;
  background: none;
  color: inherit;
  font: inherit;
  cursor: pointer;
}

svg {
  display: block;
  flex: none;
}

.icon-lg,
.icon-md {
  fill: none;
  stroke: currentColor;
  stroke-width: 1.5;
  stroke-linecap: round;
  stroke-linejoin: round;
}

.icon-lg {
  width: 69px;
  height: 69px;
}

.icon-md {
  width: 58px;
  height: 58px;
}

.icon-md.solid {
  fill: currentColor;
  stroke: none;
}

.app {
  display: flex;
  min-height: 100vh;
}

/* Sidebar */

.sidebar {
  display: flex;
  flex: none;
  flex-direction: column;
  width: 738px;
  padding: 34px 46px 0;
  background: #1775b5;
  color: #bfe0f7;
  font-weight: 500;
}

.brand {
  display: flex;
  align-items: center;
  height: 127px;
  padding-left: 104px;
}

.brand-mark {
  width: 110px;
  height: 127px;
}

.brand-name {
  padding: 31px 0 0 14px;
  color: #fff;
  font-size: 65px;
  font-weight: 700;
  line-height: 64px;
}

.bell {
  margin-left: auto;
  margin-right: 74px;
  padding-top: 20px;
}

.menu {
  display: flex;
  flex-direction: column;
  gap: 12px;
  margin-top: 60px;
}

.menu-item {
  display: flex;
  align-items: center;
  gap: 34px;
  height: 115px;
  padding: 0 23px;
  border-radius: 23px;
}

.menu-item.active {
  background: #145c90;
  color: #fff;
}

.sidebar-foot {
  display: flex;
  flex-direction: column;
  gap: 12px;
  margin-top: auto;
}

.user {
  display: flex;
  align-items: center;
  gap: 52px;
  height: 127px;
  margin: 0 23px 17px;
  padding: 0 40px;
  border-radius: 35px;
  background: #fff;
  box-shadow: 0 3px 6px rgba(0, 0, 0, .08);
  color: #111827;
}

.user-logo {
  width: 68px;
  height: 79px;
}

/* Page */

.main {
  display: flex;
  flex: 1;
  flex-direction: column;
  gap: 46px;
  min-width: 0;
  padding: 73px 56px 46px 92px;
}

.card {
  border-radius: 35px;
  background: #fff;
  box-shadow: 0 3px 8px rgba(0, 0, 0, .07);
}

.topbar {
  display: flex;
  align-items: center;
  padding: 69px 46px;
}

.date {
  display: flex;
  align-items: center;
  gap: 26px;
  height: 81px;
  padding-right: 90px;
  border-right: 3px solid #e5e7eb;
  color: #1775b5;
  font-size: 46px;
}

.date strong {
  font-size: 58px;
  font-weight: 600;
}

.status {
  display: flex;
  align-items: center;
  gap: 17px;
  margin-left: 80px;
  color: #9ca3af;
}

.pill {
  display: flex;
  align-items: center;
  gap: 14px;
  height: 81px;
  padding: 0 21px;
  border: 3px solid #cdd3fd;
  border-radius: 41px;
  background: #f1f2ff;
  color: #818cf8;
}

.lens {
  width: 40px;
  height: 40px;
}

.countdown {
  margin-left: auto;
  font-size: 47px;
  font-weight: 500;
}

.more {
  margin: 0 35px 0 81px;
  color: #9ca3af;
}

.overview {
  display: grid;
  grid-template-columns: 1fr 1fr;
  gap: 46px;
}

.event {
  padding: 69px;
}

.event-head {
  display: flex;
  align-items: center;
  justify-content: space-between;
  padding-bottom: 46px;
  border-bottom: 3px solid #e5e7eb;
}

.event-head button {
  color: #9ca3af;
}

.facts {
  display: flex;
  flex-direction: column;
  gap: 57px;
  padding-top: 52px;
  font-weight: 500;
  list-style: none;
}

.facts li {
  display: flex;
  align-items: center;
  gap: 46px;
  height: 58px;
}

.facts .icon-md {
  color: #9ca3af;
}

.hidden-contact {
  width: 1068px;
  height: 80px;
  margin-right: -46px;
  overflow: visible;
}

/* Map */

.map-card {
  padding: 46px;
}

.map {
  position: relative;
  height: 625px;
  overflow: hidden;
}

.map-canvas {
  width: 100%;
  height: 100%;
}

.line {
  fill: none;
  stroke-linejoin: round;
  vector-effect: non-scaling-stroke;
}

.casing {
  stroke: #fbf6f0;
  stroke-width: 7px;
}

.road {
  stroke: #f7a55c;
  stroke-width: 4px;
}

.minor {
  stroke: #eccb33;
  stroke-width: 4px;
}

.border {
  stroke: #7d78d2;
  stroke-width: 3px;
}

.border.thin {
  stroke: #9592cf;
  stroke-width: 2px;
}

.route {
  fill: none;
  stroke: #1fb0ea;
  stroke-width: 16px;
  stroke-linecap: round;
  stroke-linejoin: round;
  opacity: .88;
}

.place circle {
  stroke: #fff;
  stroke-width: 1px;
}

.place .capital circle {
  fill: #fff;
  stroke: #000;
  stroke-width: 3px;
}

.map-canvas text {
  font-family: Roboto, sans-serif;
  paint-order: stroke;
  stroke: rgba(255, 255, 255, .85);
  stroke-width: 5px;
  stroke-linejoin: round;
}

.region {
  fill: #7c8379;
  font-size: 30px;
  font-weight: 700;
}

.city {
  fill: #333;
  font-size: 33px;
}

.country {
  font-size: 37px;
  font-weight: 500;
}

.mapbox {
  fill: #f3fbff;
  stroke: #6a9ab3;
  stroke-width: 4px;
}

.mapbox text {
  font-family: Inter, sans-serif;
  font-size: 46px;
  font-weight: 600;
  stroke: #6a9ab3;
  stroke-width: 8px;
}

.map-tools {
  position: absolute;
  top: 29px;
  right: 29px;
  display: flex;
  flex-direction: column;
  gap: 29px;
}

.tool-group {
  border-radius: 12px;
  background: #fff;
  box-shadow: 0 0 0 6px rgba(0, 0, 0, .1);
}

.tool-group button {
  display: block;
  width: 83px;
  height: 83px;
}

.tool-group button + button {
  border-top: 3px solid #ddd;
}

.tool-group svg {
  width: 83px;
  height: 80px;
}

.map-info {
  position: absolute;
  right: 29px;
  bottom: 19px;
}

.map-info svg {
  width: 68px;
  height: 68px;
}

/* Tabs */

.tabs {
  display: flex;
  gap: 94px;
  border-bottom: 3px solid #dcdfe3;
}

.tab {
  display: flex;
  align-items: center;
  gap: 22px;
  padding: 45px 12px 47px 6px;
  border-bottom: 6px solid transparent;
  color: #6b7280;
}

.tab .icon-md {
  color: #9ca3af;
}

.tab.active {
  border-color: #2793d5;
  color: #2793d5;
}

.tab.active .icon-md {
  color: inherit;
}

/* Assistant */

.assistant {
  display: flex;
  flex-direction: column;
  gap: 46px;
  padding: 46px;
}

.alert {
  display: flex;
  gap: 34px;
  padding: 46px;
  border-radius: 17px;
}

.alert p {
  margin-top: 22px;
}

.alert a,
.alert b {
  font-weight: 600;
}

.success {
  background: #f0fdf4;
  color: #15803d;
}

.success h3 {
  color: #166534;
}

.success .icon-md {
  color: #4ade80;
}

.info {
  background: #eff6ff;
  color: #1d4ed8;
}

.info h3 {
  color: #1e40af;
}

.info .icon-md {
  color: #60a5fa;
}

.chat {
  position: fixed;
  right: 33px;
  bottom: 10px;
  width: 173px;
  height: 173px;
  border-radius: 50%;
  background: #009fe0;
  box-shadow: 0 6px 30px rgba(0, 0, 0, .1);
}
```
